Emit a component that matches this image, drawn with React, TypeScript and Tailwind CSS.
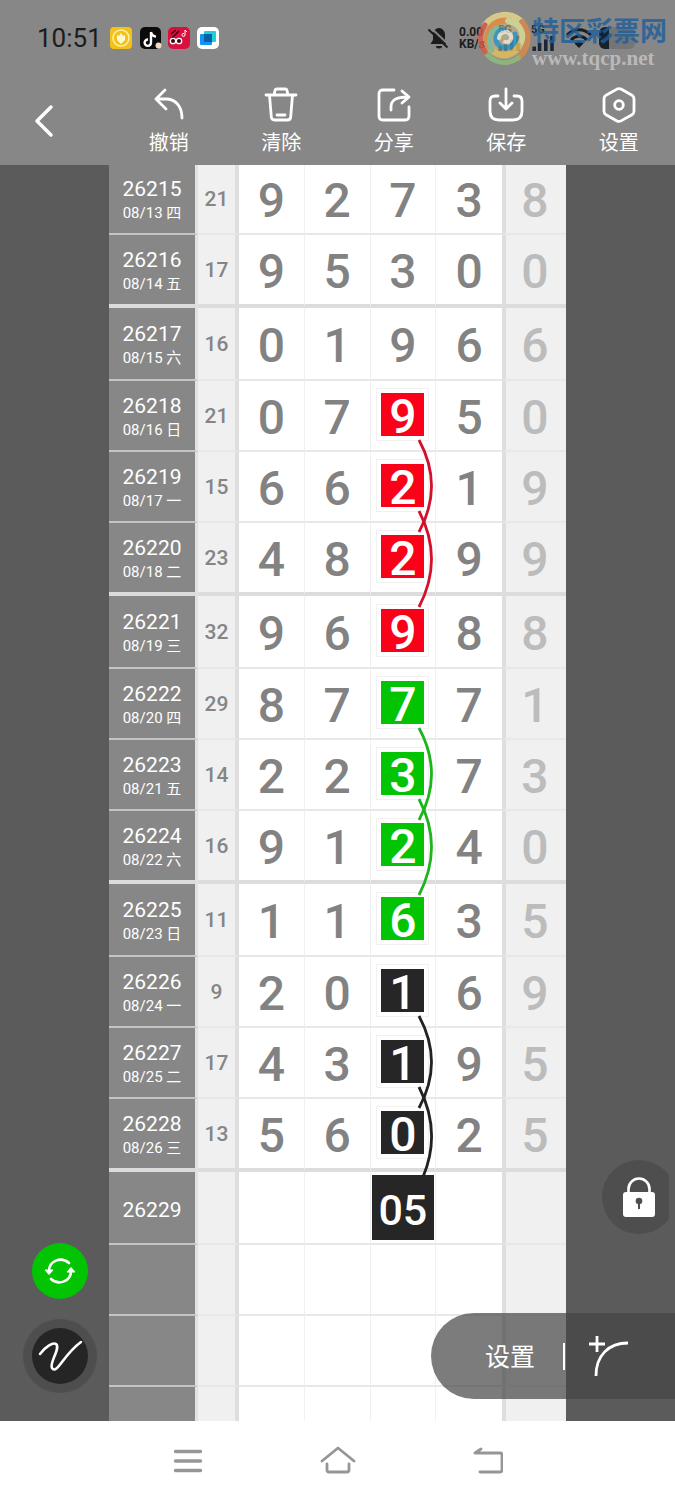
import { ReactNode } from 'react';

import clsx from 'clsx';

type Tone = 'red' | 'green' | 'black';

interface Draw {
  issue: string;
  date?: string;
  sum?: number;
  digits?: number[];
  tone?: Tone;
  arc?: 'short' | 'long' | 'end';
}

const draws: Draw[] = [
  { issue: '26215', date: '08/13 四', sum: 21, digits: [9, 2, 7, 3, 8] },
  { issue: '26216', date: '08/14 五', sum: 17, digits: [9, 5, 3, 0, 0] },
  { issue: '26217', date: '08/15 六', sum: 16, digits: [0, 1, 9, 6, 6] },
  { issue: '26218', date: '08/16 日', sum: 21, digits: [0, 7, 9, 5, 0], tone: 'red', arc: 'short' },
  { issue: '26219', date: '08/17 一', sum: 15, digits: [6, 6, 2, 1, 9], tone: 'red', arc: 'long' },
  { issue: '26220', date: '08/18 二', sum: 23, digits: [4, 8, 2, 9, 9], tone: 'red' },
  { issue: '26221', date: '08/19 三', sum: 32, digits: [9, 6, 9, 8, 8], tone: 'red' },
  { issue: '26222', date: '08/20 四', sum: 29, digits: [8, 7, 7, 7, 1], tone: 'green', arc: 'short' },
  { issue: '26223', date: '08/21 五', sum: 14, digits: [2, 2, 3, 7, 3], tone: 'green', arc: 'long' },
  { issue: '26224', date: '08/22 六', sum: 16, digits: [9, 1, 2, 4, 0], tone: 'green' },
  { issue: '26225', date: '08/23 日', sum: 11, digits: [1, 1, 6, 3, 5], tone: 'green' },
  { issue: '26226', date: '08/24 一', sum: 9, digits: [2, 0, 1, 6, 9], tone: 'black', arc: 'short' },
  { issue: '26227', date: '08/25 二', sum: 17, digits: [4, 3, 1, 9, 5], tone: 'black', arc: 'end' },
  { issue: '26228', date: '08/26 三', sum: 13, digits: [5, 6, 0, 2, 5], tone: 'black' },
  { issue: '26229' },
  { issue: '' },
  { issue: '' },
  { issue: '' },
];

const toneBg: Record<Tone, string> = {
  red: 'bg-[#fb0019]',
  green: 'bg-[#02c402]',
  black: 'bg-[#262626]',
};

const toneStroke: Record<Tone, string> = {
  red: '#d4102c',
  green: '#1eb41e',
  black: '#222222',
};

const arcPaths = {
  short: 'M2 1 Q27 47 2 93',
  long: 'M2 1 Q27 49 2 97',
  end: 'M2 1 Q25 46 6 91',
};

const Highlight = ({ value, tone, arc }: { value: number; tone: Tone; arc?: Draw['arc'] }) => (
  <span
    className={clsx(
      'relative mx-auto flex size-[43px] items-center justify-center pt-1 text-white shadow-[0_0_0_4px_#fff,0_0_0_5px_#f3f0f2]',
      toneBg[tone],
    )}
  >
    {value}
    {arc && (
      <svg className="absolute top-[46px] left-9 z-10" width="18" height="98" fill="none" aria-hidden="true">
        <path d={arcPaths[arc]} stroke={toneStroke[tone]} strokeWidth="2.8" />
      </svg>
    )}
  </span>
);

const TrendRow = ({ draw, index }: { draw: Draw; index: number }) => {
  const thick = index % 4 === 1;
  const afterThick = index % 4 === 2;
  const last = index === draws.length - 1;
  const line = last ? 'border-b-0' : thick ? 'border-b-4 border-b-[#dcdcdc]' : 'border-b-2 border-b-[#e8e8e8]';

  return (
    <tr className={clsx(last ? 'h-[34px]' : index === 0 ? 'h-[70px]' : thick || afterThick ? 'h-[73px]' : 'h-[71px]')}>
      <th
        scope="row"
        className={clsx(
          'border-r-3 border-r-[#e2e2e2] bg-[#878787] p-0 font-normal text-white',
          last ? 'border-b-0' : thick ? 'border-b-4 border-b-[#dcdcdc]' : 'border-b-2 border-b-[#c4c4c4]',
          draw.issue && 'pt-1',
        )}
      >
        <div className="text-[21px] leading-6">{draw.issue}</div>
        {draw.date && <div className="text-[15px] leading-6">{draw.date}</div>}
      </th>
      <td className={clsx('border-r-4 border-r-[#dedede] bg-[#f0f0f0] p-0 text-[21px] text-[#858585]', line)}>
        {draw.sum}
      </td>
      {[0, 1, 2, 3].map((col) => (
        <td
          key={col}
          className={clsx('bg-white p-0 text-[#828282]', line, col < 3 && 'border-r border-r-[#f0f0f0]', {
            'pt-1': !(col === 2 && (draw.tone || draw.issue === '26229')),
            'pb-0.5': col === 2 && draw.tone,
          })}
        >
          {draw.digits && col === 2 && draw.tone && (
            <Highlight value={draw.digits[col]} tone={draw.tone} arc={draw.arc} />
          )}
          {draw.digits && !(col === 2 && draw.tone) && draw.digits[col]}
          {draw.issue === '26229' && col === 2 && (
            <span className="mx-auto flex h-[65px] w-[62px] items-center justify-center bg-[#262626] pt-1 text-[43px] text-white">
              05
            </span>
          )}
        </td>
      ))}
      <td className={clsx('border-l-4 border-l-[#dedede] bg-[#f0f0f0] p-0 pt-1 pr-0.5 text-[#bcbcbc]', line)}>
        {draw.digits?.[4]}
      </td>
    </tr>
  );
};

const ToolButton = ({ label, children }: { label: string; children: ReactNode }) => (
  <button type="button" className="flex flex-col items-center gap-2 text-xl leading-6 text-white">
    <svg
      width="36"
      height="36"
      viewBox="0 0 36 36"
      fill="none"
      stroke="currentColor"
      strokeWidth="2.8"
      strokeLinecap="round"
      strokeLinejoin="round"
      aria-hidden="true"
    >
      {children}
    </svg>
    {label}
  </button>
);

const AppIcons = () => (
  <svg width="110" height="24" viewBox="0 0 110 24" aria-hidden="true">
    <rect x="0" y="1" width="22" height="22" rx="4" fill="#f2c21a" />
    <circle cx="11" cy="12" r="8" fill="none" stroke="#fff0a8" strokeWidth="1.5" />
    <path d="M7 9l2 1 2-3 2 3 2-1v5l-4 4-4-4z" fill="#fff8d8" />
    <rect x="30" y="1" width="21" height="22" rx="5" fill="#0b0b0b" />
    <path d="M41 6v10.500a3.200 3.200 0 1 1-3-3M41 6c.6 3 2.500 4.400 5 4.600" fill="none" stroke="#fff" strokeWidth="2.400" />
    <circle cx="48.500" cy="19.500" r="3" fill="#f7d9c6" />
    <rect x="58" y="1" width="22" height="22" rx="5" fill="#d9103d" />
    <path d="M61 8l5-4M62 12l7-7" stroke="#3b0715" strokeWidth="1.500" />
    <circle cx="63" cy="15" r="2.700" fill="#3b0715" stroke="#fff" strokeWidth="1.300" />
    <circle cx="69" cy="15" r="2.700" fill="#3b0715" stroke="#fff" strokeWidth="1.300" />
    <path d="M75 4v5a1.500 1.500 0 1 1-1-1.500M75 4l2 2" stroke="#fff" fill="none" />
    <rect x="87" y="1" width="22" height="22" rx="5" fill="#fff" />
    <rect x="94" y="5" width="12" height="11" rx="1" fill="#1fd0dc" />
    <rect x="90" y="8" width="12" height="11" rx="1" fill="#1593f0" />
    <rect x="94" y="8" width="8" height="8" fill="#0560a8" />
  </svg>
);

const Signal = () => (
  <svg width="26" height="16" viewBox="0 0 26 18" fill="#1d2733" aria-hidden="true">
    <rect x="0" y="13" width="4" height="5" />
    <rect x="6" y="9" width="4" height="9" />
    <rect x="13" y="5" width="4" height="13" />
    <rect x="20" y="1" width="4" height="17" />
  </svg>
);

const StatusIcons = () => (
  <div className="flex items-center text-[#1c1c1c]">
    <svg width="24" height="24" viewBox="0 0 24 24" aria-hidden="true">
      <path d="M12 2c-4 .6-6 3.500-6 7v5l-2.500 4h17L18 14V9c0-3.500-2-6.400-6-7z" fill="currentColor" />
      <path d="M9 20h6a3 2.500 0 0 1-6 0z" fill="currentColor" />
      <path d="M3.500 1.500l19 18" stroke="#878787" strokeWidth="2" />
      <path d="M1.500 3.500l19 18" stroke="currentColor" strokeWidth="2" />
    </svg>
    <div className="ml-2 w-8 text-[12px] leading-3 font-bold">
      <div>0.00</div>
      <div>KB/s</div>
    </div>
    <div className="ml-1.5 w-[34px] text-[11px] leading-[10px] font-bold">
      <div className="pl-px">5G</div>
      <Signal />
    </div>
    <div className="w-[30px] text-[11px] leading-[10px] font-bold">
      <div>5G</div>
      <Signal />
    </div>
    <svg className="ml-1" width="28" height="24" viewBox="0 0 26 24" fill="none" stroke="currentColor" aria-hidden="true">
      <path d="M1 9c7-7 17-7 24 0M5 14c5-5 11-5 16 0" strokeWidth="3" />
      <path d="M8.500 17.500c3-2.600 6-2.600 9 0L13 22z" fill="currentColor" stroke="none" />
    </svg>
    <svg className="ml-1.5" width="36" height="22" viewBox="0 0 36 22" aria-hidden="true">
      <rect x="0" y="0" width="36" height="22" rx="6" fill="#737577" />
      <path d="M6 0h4v22H6a6 6 0 0 1-6-6V6a6 6 0 0 1 6-6z" fill="#18222c" />
    </svg>
  </div>
);

const Watermark = () => (
  <div className="absolute top-2 right-2 flex items-center opacity-80">
    <svg width="56" height="56" viewBox="0 0 54 56" fill="none" strokeLinecap="round" aria-hidden="true">
      <circle cx="27" cy="28" r="21" fill="#e6c98a" opacity=".6" />
      <path d="M8 15C16 3 34 1 45 12" stroke="#eadb8c" strokeWidth="6" />
      <path d="M45 12c9 11 7 27-4 36" stroke="#e08a45" strokeWidth="6" />
      <path d="M41 48c-11 8-25 5-33-6" stroke="#8fc07a" strokeWidth="5" />
      <path d="M8 42C2 33 2 23 8 15" stroke="#dd5a48" strokeWidth="5" />
      <path d="M11 36C7 20 18 9 31 11" stroke="#f08c3c" strokeWidth="6" />
      <path d="M31 11c13 2 18 14 11 25" stroke="#dfe39a" strokeWidth="6" />
      <path d="M42 36c-6 10-18 12-27 4" stroke="#e9c35a" strokeWidth="6" />
      <path d="M15 40c-5-8-3-18 5-22" stroke="#7fc7a0" strokeWidth="5" />
      <path d="M38 24c3 10-7 17-15 12-7-5-5-15 4-17" stroke="#2f9ccc" strokeWidth="5" />
      <path d="M22 28c1-7 10-8 12-2 1 4-2 7-6 6" stroke="#f6f3e0" strokeWidth="4" />
    </svg>
    <div className="flex flex-col pt-2">
      <span className="text-[27px] leading-8 font-bold text-[#1f5f9c]">特区彩票网</span>
      <span className="font-['Liberation_Serif',serif] text-[21px] leading-5 font-bold text-[#c6c6c6]">www.tqcp.net</span>
    </div>
  </div>
);

export default function App() {
  return (
    <div className="flex min-h-screen flex-col bg-white font-[Roboto,'Noto_Sans_CJK_SC',sans-serif]">
      <header className="relative h-[165px] bg-[#878787]">
        <div className="flex h-[75px] items-center justify-between pr-10 pl-[37px]">
          <div className="flex items-center gap-2">
            <time className="text-[26px] leading-8 text-[#1c1c1c]">10:51</time>
            <AppIcons />
          </div>
          <StatusIcons />
        </div>
        <Watermark />
        <div className="grid grid-cols-6 pt-3">
          <button type="button" aria-label="返回" className="flex items-center pl-8 text-white">
            <svg width="24" height="34" viewBox="0 0 24 34" fill="none" stroke="currentColor" strokeWidth="3.500" strokeLinecap="round" strokeLinejoin="round" aria-hidden="true">
              <path d="M19 3L5 17l14 14" />
            </svg>
          </button>
          <ToolButton label="撤销">
            <path d="M14 3L5 12l10 10M5 12h10c10 0 16 8 16 19" />
          </ToolButton>
          <ToolButton label="清除">
            <path d="M3 8h30M11 8l1-4.500Q12.300 2 14 2h8q1.700 0 2 1.500L25 8M6.500 8l1.800 22q.3 3 3.200 3h13q2.900 0 3.200-3L29.500 8M14 28h8" />
          </ToolButton>
          <ToolButton label="分享">
            <path d="M18 3H7Q3 3 3 7v22q0 4 4 4h22q4 0 4-4v-9M15 23v-3C15 13 20 10 32 10M26 4l7 6-7 6" />
          </ToolButton>
          <ToolButton label="保存">
            <path d="M10 9H7q-5 0-5 5v10q0 9 9 9h14q9 0 9-9V14q0-5-5-5h-3M18 2v20M12 16l6 6 6-6" />
          </ToolButton>
          <ToolButton label="设置">
            <path d="M16 2.100q2-1.100 4 0l11 6.200q2 1.100 2 3.400v12.600q0 2.300-2 3.400l-11 6.200q-2 1.100-4 0L5 27.700q-2-1.100-2-3.400V11.700Q3 9.400 5 8.300z" />
            <circle cx="18" cy="18" r="4.300" />
          </ToolButton>
        </div>
      </header>

      <main className="relative grow bg-[#5b5b5b] px-[109px]">
        <table className="w-full table-fixed border-separate border-spacing-0 text-center text-5xl leading-[48px] font-medium">
          <colgroup>
            <col className="w-[89px]" />
            <col className="w-[41px]" />
            <col />
            <col />
            <col />
            <col />
            <col className="w-16" />
          </colgroup>
          <tbody>
            {draws.map((draw, index) => (
              <TrendRow key={index} draw={draw} index={index} />
            ))}
          </tbody>
        </table>

        <button type="button" aria-label="刷新" className="absolute bottom-[122px] left-8 flex size-14 items-center justify-center rounded-full bg-[#02c402]">
          <svg width="32" height="28" viewBox="0 0 32 28" fill="none" stroke="#fff" strokeWidth="2.600" aria-hidden="true">
            <path d="M5 14C5 4 17-1 25 6M27 14c0 10-12 15-20 8" strokeLinecap="round" />
            <path d="M1 13h8l-4 4.500zM31 15h-8l4-4.500z" fill="#fff" strokeWidth="1" />
          </svg>
        </button>

        <button type="button" aria-label="画笔" className="absolute bottom-7 left-[23px] flex size-[74px] items-center justify-center rounded-full bg-[#4e4e4e]">
          <span className="flex size-14 items-center justify-center rounded-full bg-[#252525]">
            <svg width="46" height="34" viewBox="0 0 46 34" fill="none" stroke="#fff" strokeWidth="2.600" strokeLinecap="round" aria-hidden="true">
              <path d="M3 15C8 8 16 3 19 5c5 4-7 19-4 24 5 7 11-13 29-26" />
            </svg>
          </span>
        </button>

        <div className="absolute right-1.5 bottom-[187px] w-[67px] overflow-hidden">
          <button type="button" aria-label="锁定" className="flex size-[74px] items-center justify-center rounded-full bg-[#4e4e4e]">
            <svg width="34" height="40" viewBox="0 0 34 40" aria-hidden="true">
              <path d="M6.500 17v-5a10.500 10.500 0 0 1 21 0v5" fill="none" stroke="#fff" strokeWidth="2.600" />
              <rect x="1" y="15" width="32" height="25" rx="3" fill="#fff" />
              <circle cx="17" cy="24" r="3.300" fill="#4e4e4e" />
              <path d="M17 25v7" stroke="#4e4e4e" strokeWidth="2" />
            </svg>
          </button>
        </div>

        <div className="absolute right-0 bottom-[22px] flex h-[86px] w-[244px] items-center rounded-l-full bg-[#444444]/70 pl-[54px] text-white">
          <button type="button" className="pt-1 text-[25px] leading-8">
            设置
          </button>
          <span className="ml-7 h-[27px] w-0.5 bg-white" />
          <button type="button" aria-label="添加曲线" className="ml-6">
            <svg width="40" height="42" viewBox="0 0 40 42" fill="none" stroke="currentColor" strokeWidth="2.800" aria-hidden="true">
              <path d="M0 9h16M8 1v16M7 41C7 20 20 8 39 8" />
            </svg>
          </button>
        </div>
      </main>

      <nav className="flex h-[79px] items-center justify-center gap-[120px] text-[#969696]">
        <button type="button" aria-label="最近任务">
          <svg width="30" height="30" viewBox="0 0 30 30" stroke="currentColor" strokeWidth="3.400" strokeLinecap="round" aria-hidden="true">
            <path d="M2.500 5.500h25M2.500 15h25M2.500 24.500h25" />
          </svg>
        </button>
        <button type="button" aria-label="主屏幕">
          <svg className="overflow-visible" width="30" height="30" viewBox="0 0 30 30" fill="none" stroke="currentColor" strokeWidth="2.800" strokeLinecap="round" strokeLinejoin="round" aria-hidden="true">
            <path d="M-1 15L15 2l16 13M4 18v6q0 2 2 2h18q2 0 2-2v-6" />
          </svg>
        </button>
        <button type="button" aria-label="后退">
          <svg width="30" height="30" viewBox="0 0 30 30" fill="none" stroke="currentColor" strokeWidth="2.800" strokeLinecap="round" strokeLinejoin="round" aria-hidden="true">
            <path d="M8 3L2 7h25q2 0 2 2v15q0 2-2 2H7" />
          </svg>
        </button>
      </nav>
    </div>
  );
}
